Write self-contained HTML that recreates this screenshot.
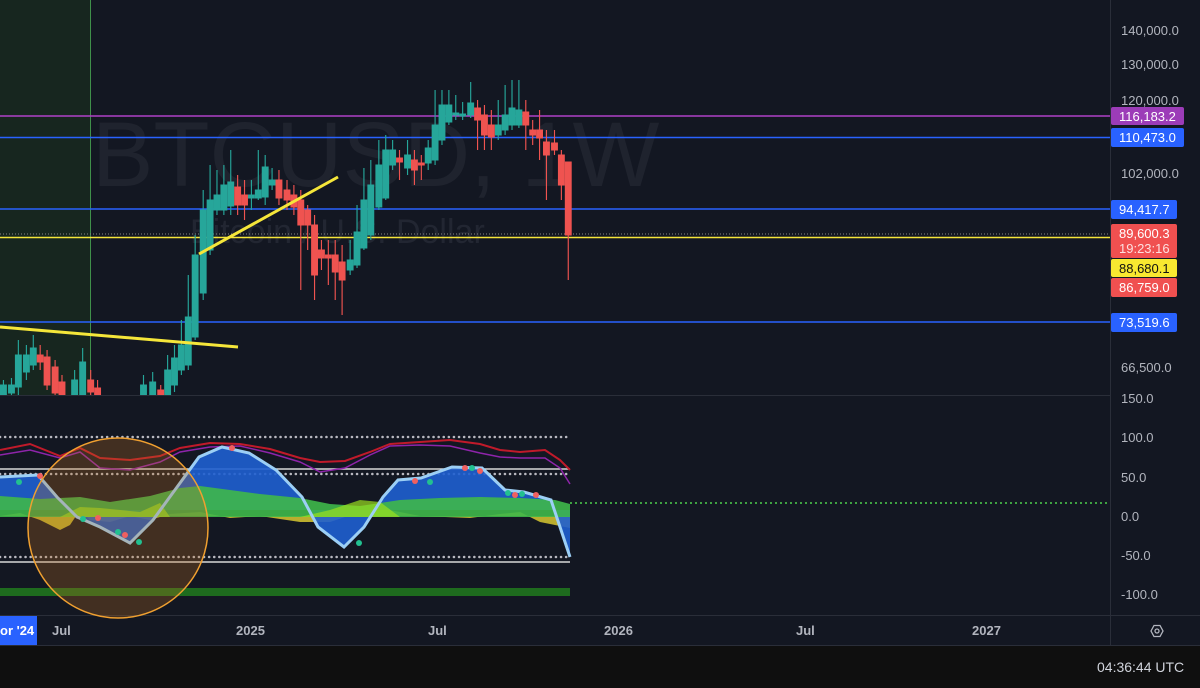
<!DOCTYPE html>
<html><head><meta charset="utf-8"><style>
html,body{margin:0;padding:0;background:#131722;width:1200px;height:688px;overflow:hidden;font-family:"Liberation Sans",sans-serif}
svg{display:block}
</style></head><body>
<svg width="1200" height="688" viewBox="0 0 1200 688" xmlns="http://www.w3.org/2000/svg" font-family="Liberation Sans, sans-serif">
<rect width="1200" height="688" fill="#131722"/>
<rect x="0" y="0" width="90" height="395" fill="#17261f"/>
<line x1="90.5" y1="0" x2="90.5" y2="395" stroke="#3f8f4a" stroke-width="1"/>
<text x="92" y="186" font-size="92" fill="#2a2e39" fill-opacity="0.55">BTCUSD, 1W</text>
<text x="190" y="243" font-size="34" fill="#2a2e39" fill-opacity="0.7">Bitcoin / U.S. Dollar</text>
<line x1="0" y1="116" x2="1110" y2="116" stroke="#b040c8" stroke-width="1.5"/>
<line x1="0" y1="137.5" x2="1110" y2="137.5" stroke="#2962ff" stroke-width="1.5"/>
<line x1="0" y1="209" x2="1110" y2="209" stroke="#2962ff" stroke-width="1.5"/>
<line x1="0" y1="234" x2="1110" y2="234" stroke="#888" stroke-width="1" stroke-dasharray="1 2"/>
<line x1="0" y1="237.5" x2="1110" y2="237.5" stroke="#f5e63a" stroke-width="1.5"/>
<line x1="0" y1="322" x2="1110" y2="322" stroke="#2962ff" stroke-width="1.5"/>
<g transform="scale(1.148,1)">
<g stroke="#26a69a" fill="#26a69a" stroke-width="1">
<path d="M3 380V395M10 378V395M16 340V395M23 345V380M29 335V370M65 370V395M72 348V395M125 375V395M133 372V395M146 355V395M152 345V392M158 320V375M164 275V370M170 235V340M177 190V300M183 165V255M189 170V215M195 165V215M201 150V215M219 180V210M225 150V200M231 155V205M237 168V190M305 240V275M311 205V268M317 168V250M323 160V240M330 140V210M336 135V200M342 140V170M355 140V175M373 140V170M379 90V165M385 90V145M391 90V125M397 95V120M403 102V120M410 82V118M434 100V140M440 85V135M446 80V130M452 80V128"/>
<rect x="0.5" y="385" width="5" height="10"/><rect x="7.5" y="385" width="5" height="8"/><rect x="13.5" y="355" width="5" height="32"/><rect x="20.5" y="355" width="5" height="17"/><rect x="26.5" y="348" width="5" height="17"/><rect x="62.5" y="380" width="5" height="15"/><rect x="69.5" y="362" width="5" height="33"/><rect x="122.5" y="385" width="5" height="10"/><rect x="130.5" y="382" width="5" height="13"/><rect x="143.5" y="370" width="5" height="25"/><rect x="149.5" y="358" width="5" height="27"/><rect x="155.5" y="345" width="5" height="25"/><rect x="161.5" y="317" width="5" height="48"/><rect x="167.5" y="255" width="5" height="82"/><rect x="174.5" y="210" width="5" height="83"/><rect x="180.5" y="200" width="5" height="50"/><rect x="186.5" y="195" width="5" height="15"/><rect x="192.5" y="185" width="5" height="25"/><rect x="198.5" y="182" width="5" height="24"/><rect x="216.5" y="195" width="5" height="3"/><rect x="222.5" y="190" width="5" height="8"/><rect x="228.5" y="167" width="5" height="30"/><rect x="234.5" y="180" width="5" height="5"/><rect x="302.5" y="260" width="5" height="10"/><rect x="308.5" y="232" width="5" height="33"/><rect x="314.5" y="200" width="5" height="48"/><rect x="320.5" y="185" width="5" height="50"/><rect x="327.5" y="165" width="5" height="42"/><rect x="333.5" y="150" width="5" height="48"/><rect x="339.5" y="150" width="5" height="15"/><rect x="352.5" y="155" width="5" height="13"/><rect x="370.5" y="148" width="5" height="15"/><rect x="376.5" y="125" width="5" height="35"/><rect x="382.5" y="105" width="5" height="35"/><rect x="388.5" y="105" width="5" height="17"/><rect x="394.5" y="113" width="5" height="2"/><rect x="400.5" y="114" width="5" height="2"/><rect x="407.5" y="103" width="5" height="12"/><rect x="431.5" y="125" width="5" height="10"/><rect x="437.5" y="115" width="5" height="15"/><rect x="443.5" y="108" width="5" height="17"/><rect x="449.5" y="110" width="5" height="15"/>
</g>
<g stroke="#ef5350" fill="#ef5350" stroke-width="1">
<path d="M35 345V370M41 350V390M48 360V395M54 375V395M79 370V395M85 380V395M140 385V395M207 175V215M213 180V220M243 170V205M250 180V210M256 185V215M262 190V290M268 205V250M274 215V300M280 240V270M286 240V285M292 240V300M298 245V315M348 150V180M361 150V185M367 155V180M416 100V150M422 105V150M428 110V150M458 100V150M464 120V145M470 110V160M476 130V200M483 130V155M489 150V200M495 170V280"/>
<rect x="32.5" y="355" width="5" height="7"/><rect x="38.5" y="357" width="5" height="28"/><rect x="45.5" y="367" width="5" height="26"/><rect x="51.5" y="382" width="5" height="13"/><rect x="76.5" y="380" width="5" height="12"/><rect x="82.5" y="388" width="5" height="7"/><rect x="137.5" y="390" width="5" height="5"/><rect x="204.5" y="187" width="5" height="18"/><rect x="210.5" y="195" width="5" height="10"/><rect x="240.5" y="180" width="5" height="18"/><rect x="247.5" y="190" width="5" height="10"/><rect x="253.5" y="195" width="5" height="12"/><rect x="259.5" y="200" width="5" height="25"/><rect x="265.5" y="210" width="5" height="15"/><rect x="271.5" y="225" width="5" height="50"/><rect x="277.5" y="250" width="5" height="8"/><rect x="283.5" y="255" width="5" height="3"/><rect x="289.5" y="255" width="5" height="17"/><rect x="295.5" y="262" width="5" height="18"/><rect x="345.5" y="158" width="5" height="4"/><rect x="358.5" y="160" width="5" height="10"/><rect x="364.5" y="163" width="5" height="2"/><rect x="413.5" y="108" width="5" height="12"/><rect x="419.5" y="115" width="5" height="20"/><rect x="425.5" y="125" width="5" height="12"/><rect x="455.5" y="112" width="5" height="13"/><rect x="461.5" y="130" width="5" height="5"/><rect x="467.5" y="130" width="5" height="8"/><rect x="473.5" y="142" width="5" height="13"/><rect x="480.5" y="143" width="5" height="7"/><rect x="486.5" y="155" width="5" height="30"/><rect x="492.5" y="162" width="5" height="73"/>
</g>
</g>
<line x1="0" y1="327" x2="238" y2="347" stroke="#f5e63a" stroke-width="3"/>
<line x1="199" y1="254" x2="338" y2="177" stroke="#f5e63a" stroke-width="3"/>
<line x1="0" y1="395.5" x2="1110" y2="395.5" stroke="#2a2e39"/>
<line x1="1110.5" y1="0" x2="1110.5" y2="645" stroke="#2a2e39"/>
<line x1="0" y1="615.5" x2="1200" y2="615.5" stroke="#2a2e39"/>
<line x1="0" y1="645.5" x2="1200" y2="645.5" stroke="#2a2e39"/>
<rect x="0" y="646" width="1200" height="42" fill="#0f0f0f"/>
<rect x="0" y="588" width="570" height="8" fill="#1e6b1e"/>
<line x1="0" y1="437" x2="570" y2="437" stroke="#b8b8c0" stroke-width="2.5" stroke-dasharray="0.1 5" stroke-linecap="round"/>
<line x1="0" y1="469" x2="570" y2="469" stroke="#d8d8d8" stroke-width="1.5"/>
<line x1="0" y1="474" x2="570" y2="474" stroke="#b8b8c0" stroke-width="2.5" stroke-dasharray="0.1 5" stroke-linecap="round"/>
<line x1="0" y1="557" x2="570" y2="557" stroke="#b8b8c0" stroke-width="2.5" stroke-dasharray="0.1 5" stroke-linecap="round"/>
<line x1="0" y1="562" x2="570" y2="562" stroke="#d8d8d8" stroke-width="1.5"/>
<path d="M0 450L30 444L60 456L80 448L100 458L130 460L160 456L180 448L210 443L240 444L270 449L300 458L320 462L345 461L370 452L390 444L420 442L450 440L480 444L500 450L520 452L545 450L560 460L570 470" fill="none" stroke="#c01a2a" stroke-width="2"/>
<path d="M0 455L30 450L60 458L80 452L100 468L130 470L160 462L180 452L210 447L240 446L270 453L300 462L320 472L345 468L370 455L390 446L420 445L450 446L480 453L500 457L520 458L545 458L560 468L570 484" fill="none" stroke="#8e24aa" stroke-width="1.5"/>
<path d="M0 516L20 513L40 520L60 530L70 525L80 510L90 520L110 522L130 516L150 520L170 514L200 512L230 518L260 516L300 522L330 522L360 512L380 508L420 516L470 518L500 514L520 512L540 522L560 526L570 528L570 516Z" fill="#d8c830" fill-opacity="0.85"/>
<path d="M0 477L38 475L57 497L77 517L100 527L130 543L153 520L180 483L199 457L222 447L249 453L276 470L302 497L318 527L344 547L364 527L383 497L398 480L421 478L452 467L482 468L505 490L524 492L551 500L570 557L570 510L0 510Z" fill="#1f5fd0" fill-opacity="0.9"/>
<path d="M0 496L40 499L80 497L110 502L150 496L180 488L200 486L230 490L260 494L300 498L330 504L360 506L400 500L440 498L480 497L520 498L555 500L570 504L570 517L0 517Z" fill="#3fb84a" fill-opacity="0.9"/>
<path d="M60 517L80 507L100 508L140 512L160 503L170 517Z M300 517L330 510L360 500L380 502L400 517Z" fill="#9be020" fill-opacity="0.7"/>
<path d="M0 477L38 475L57 497L77 517L100 527L130 543L153 520L180 483L199 457L222 447L249 453L276 470L302 497L318 527L344 547L364 527L383 497L398 480L421 478L452 467L482 468L505 490L524 492L551 500L570 557" fill="none" stroke="#9ccff5" stroke-width="3"/>
<circle cx="118" cy="528" r="90" fill="#c07020" fill-opacity="0.28" stroke="#f0a030" stroke-width="1.5"/>
<line x1="570" y1="503" x2="1110" y2="503" stroke="#4cd04c" stroke-width="1.5" stroke-dasharray="2 3"/>
<g fill="#22c090"><circle cx="19" cy="482" r="3"/><circle cx="83" cy="519" r="3"/><circle cx="118" cy="532" r="3"/><circle cx="139" cy="542" r="3"/><circle cx="359" cy="543" r="3"/><circle cx="430" cy="482" r="3"/><circle cx="472" cy="468" r="3"/><circle cx="508" cy="493" r="3"/><circle cx="522" cy="494" r="3"/></g>
<g fill="#f06060"><circle cx="40" cy="476" r="3"/><circle cx="98" cy="518" r="3"/><circle cx="125" cy="535" r="3"/><circle cx="232" cy="448" r="3"/><circle cx="415" cy="481" r="3"/><circle cx="465" cy="468" r="3"/><circle cx="480" cy="471" r="3"/><circle cx="515" cy="495" r="3"/><circle cx="536" cy="495" r="3"/></g>
<g font-size="13" fill="#b2b5be">
<text x="1121" y="35">140,000.0</text>
<text x="1121" y="69">130,000.0</text>
<text x="1121" y="105">120,000.0</text>
<text x="1121" y="178">102,000.0</text>
<text x="1121" y="372">66,500.0</text>
<text x="1121" y="403">150.0</text>
<text x="1121" y="442">100.0</text>
<text x="1121" y="482">50.0</text>
<text x="1121" y="521">0.0</text>
<text x="1121" y="560">-50.0</text>
<text x="1121" y="599">-100.0</text>
</g>
<g font-size="13">
<rect x="1111" y="107" width="73" height="18" rx="2" fill="#9c3cb8"/><text x="1119" y="121" fill="#fff">116,183.2</text>
<rect x="1111" y="128" width="73" height="19" rx="2" fill="#2962ff"/><text x="1119" y="142" fill="#fff">110,473.0</text>
<rect x="1111" y="200" width="66" height="19" rx="2" fill="#2962ff"/><text x="1119" y="214" fill="#fff">94,417.7</text>
<rect x="1111" y="224" width="66" height="34" rx="2" fill="#f05050"/><text x="1119" y="238" fill="#fff">89,600.3</text><text x="1119" y="253" fill="#fde0e0">19:23:16</text>
<rect x="1111" y="259" width="66" height="18" rx="2" fill="#f8e830"/><text x="1119" y="273" fill="#111">88,680.1</text>
<rect x="1111" y="278" width="66" height="19" rx="2" fill="#f05050"/><text x="1119" y="292" fill="#fff">86,759.0</text>
<rect x="1111" y="313" width="66" height="19" rx="2" fill="#2962ff"/><text x="1119" y="327" fill="#fff">73,519.6</text>
</g>
<rect x="0" y="616" width="37" height="29" fill="#2962ff"/>
<g font-size="13" fill="#b2b5be" font-weight="bold">
<text x="0" y="635" fill="#fff">or '24</text>
<text x="52" y="635">Jul</text>
<text x="236" y="635">2025</text>
<text x="428" y="635">Jul</text>
<text x="604" y="635">2026</text>
<text x="796" y="635">Jul</text>
<text x="972" y="635">2027</text>
</g>
<path d="M1151 631L1154 625.5H1160L1163 631L1160 636.5H1154Z" fill="none" stroke="#b2b5be" stroke-width="1.3"/>
<circle cx="1157" cy="631" r="2" fill="none" stroke="#b2b5be" stroke-width="1.3"/>
<text x="1097" y="672" font-size="14" fill="#d1d4dc">04:36:44 UTC</text>
</svg>
</body></html>
